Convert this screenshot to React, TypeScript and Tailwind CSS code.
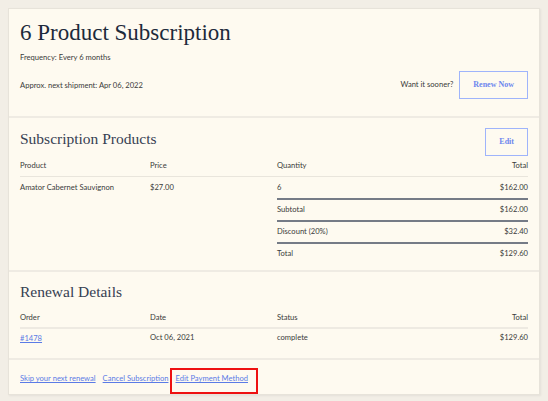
import React from "react";

const serif = "font-['Liberation_Serif','DejaVu_Serif',serif]";
const sans = "font-['Lato','Open_Sans',sans-serif]";

type Line = { label: string; total: string };

const summary: Line[] = [
	{ label: "Subtotal", total: "$162.00" },
	{ label: "Discount (20%)", total: "$32.40" },
	{ label: "Total", total: "$129.60" },
];

const OutlineButton = ({ title }: { title: string }) => (
	<button
		className={`${serif} h-[28px] border-[1.5px] border-[#9fb4fb] px-[13px] text-[8px] font-bold text-[#6d87ee]`}
	>
		{title}
	</button>
);

const Link = ({ children }: { children: React.ReactNode }) => (
	<a href="#" className="leading-[12px] text-[#5b7be6] underline underline-offset-[1px]">
		{children}
	</a>
);

export default function App() {
	return (
		<div className={`${sans} min-h-[401px] w-[548px] bg-[#f2eee6] pl-[8px] pt-[8px] text-[7.6px] text-[#3a3a3a]`}>
			<div className="w-[532px] border border-[#e7e3da] bg-[#fefaf0] shadow-[1px_1px_2px_rgba(0,0,0,0.06)]">
				{/* header */}
				<div className="border-b-2 border-[#efebe3] px-[11px] pt-[10px] pb-[17px]">
					<h1 className={`${serif} text-[23px] leading-[28px] text-[#1d2a3b]`}>6 Product Subscription</h1>
					<p className="mt-[4px] leading-[12px]">Frequency: Every 6 months</p>
					<div className="mt-[8px] flex items-center justify-between">
						<p className="leading-[12px]">Approx. next shipment: Apr 06, 2022</p>
						<div className="flex items-center gap-[6px]">
							<span>Want it sooner?</span>
							<OutlineButton title="Renew Now" />
						</div>
					</div>
				</div>

				{/* products */}
				<div className="border-b-2 border-[#efebe3] px-[11px] pt-[10px] pb-[6px]">
					<div className="flex items-start justify-between">
						<h2 className={`${serif} text-[15.5px] leading-[22px] text-[#364052]`}>Subscription Products</h2>
						<OutlineButton title="Edit" />
					</div>
					<div className="mt-[-1px] grid grid-cols-[130px_127px_1fr]">
						<div className="flex h-[22px] items-center border-b border-[#e9e5dc]">Product</div>
						<div className="flex h-[22px] items-center border-b border-[#e9e5dc]">Price</div>
						<div className="flex h-[22px] items-center justify-between border-b border-[#e9e5dc]">
							<span>Quantity</span>
							<span>Total</span>
						</div>
						<div className="flex h-[21px] items-center">Amator Cabernet Sauvignon</div>
						<div className="flex h-[21px] items-center">$27.00</div>
						<div className="flex h-[21px] items-center justify-between">
							<span>6</span>
							<span>$162.00</span>
						</div>
						{summary.map((row) => (
							<React.Fragment key={row.label}>
								<div />
								<div />
								<div className="flex h-[22px] items-center justify-between border-t-2 border-[#757b86]">
									<span>{row.label}</span>
									<span>{row.total}</span>
								</div>
							</React.Fragment>
						))}
					</div>
				</div>

				{/* renewals */}
				<div className="border-b-2 border-[#efebe3] px-[11px] pt-[9px] pb-[11px]">
					<h2 className={`${serif} text-[15.5px] leading-[22px] text-[#364052]`}>Renewal Details</h2>
					<div className="mt-[5px] grid grid-cols-[130px_127px_1fr]">
						<div className="flex h-[21px] items-center border-b-2 border-[#eeeae2]">Order</div>
						<div className="flex h-[21px] items-center border-b-2 border-[#eeeae2]">Date</div>
						<div className="flex h-[21px] items-center justify-between border-b-2 border-[#eeeae2]">
							<span>Status</span>
							<span>Total</span>
						</div>
						<div className="flex h-[18px] items-center">
							<Link>#1478</Link>
						</div>
						<div className="flex h-[18px] items-center">Oct 06, 2021</div>
						<div className="flex h-[18px] items-center justify-between">
							<span>complete</span>
							<span>$129.60</span>
						</div>
					</div>
				</div>

				{/* actions */}
				<div className="flex items-start gap-[7px] px-[11px] pt-[8px]">
					<span className="mt-[4px] flex">
						<Link>Skip your next renewal</Link>
					</span>
					<span className="mt-[4px] flex">
						<Link>Cancel Subscription</Link>
					</span>
					<span className="ml-[-5px] flex h-[26px] items-start border-2 border-[#ee1111] pt-[2px] pl-[3px] pr-[8px]">
						<Link>Edit Payment Method</Link>
					</span>
				</div>
			</div>
		</div>
	);
}
